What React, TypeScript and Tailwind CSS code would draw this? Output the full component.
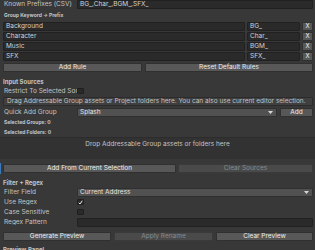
import React from 'react';

const rules = [
  { keyword: 'Background', prefix: 'BG_' },
  { keyword: 'Character', prefix: 'Char_' },
  { keyword: 'Music', prefix: 'BGM_' },
  { keyword: 'SFX', prefix: 'SFX_' },
];

const Field: React.FC<{ value?: string; className?: string }> = ({ value, className = '' }) => (
  <div
    className={`h-[9px] bg-[#2a2a2a] border border-[#212121] rounded-[1px] flex items-center px-[2px] text-[#d2d2d2] leading-none overflow-hidden whitespace-nowrap ${className}`}
  >
    {value}
  </div>
);

const Button: React.FC<{ label: string; disabled?: boolean; className?: string }> = ({
  label,
  disabled,
  className = '',
}) => (
  <div
    className={`h-[9px] border rounded-[1px] flex items-center justify-center leading-none whitespace-nowrap ${
      disabled
        ? 'bg-[#4a4a4a] border-[#3a3a3a] text-[#8a8a8a]'
        : 'bg-[#585858] border-[#303030] text-[#eeeeee]'
    } ${className}`}
  >
    {label}
  </div>
);

const Dropdown: React.FC<{ value: string; className?: string }> = ({ value, className = '' }) => (
  <div
    className={`h-[9px] bg-[#515151] border border-[#303030] rounded-[1px] flex items-center justify-between pl-[2px] pr-[3px] text-[#e4e4e4] leading-none ${className}`}
  >
    <span>{value}</span>
    <svg width="5" height="3" viewBox="0 0 5 3">
      <polygon points="0,0 5,0 2.5,3" fill="#d8d8d8" />
    </svg>
  </div>
);

const Checkbox: React.FC<{ checked?: boolean }> = ({ checked }) => (
  <div className="w-[7px] h-[6px] bg-[#2a2a2a] border border-[#1f1f1f] rounded-[1px] flex items-center justify-center">
    {checked && (
      <svg width="5" height="5" viewBox="0 0 10 10">
        <path d="M1.5 5.5 L4 8 L8.5 1.5" stroke="#eeeeee" strokeWidth="2" fill="none" />
      </svg>
    )}
  </div>
);

const Row: React.FC<{ label: string; children?: React.ReactNode }> = ({ label, children }) => (
  <div className="h-[10px] flex items-center">
    <div className="w-[74px] pl-[1px] whitespace-nowrap overflow-hidden leading-none">{label}</div>
    <div className="flex-1 flex items-center">{children}</div>
  </div>
);

const Header: React.FC<{ label: string; className?: string }> = ({ label, className = '' }) => (
  <div className={`h-[9px] flex items-center pl-[1px] font-bold text-[6px] leading-none ${className}`}>{label}</div>
);

const App: React.FC = () => {
  return (
    <div className="relative w-[315px] h-[250px] overflow-hidden bg-[#383838] font-['Inter',sans-serif] text-[6.5px] text-[#c4c4c4]">
      <div className="px-[2px] pr-[2px]">
        <div className="h-[9px] flex items-center">
          <div className="w-[75px] pl-[2px] leading-none whitespace-nowrap">Known Prefixes (CSV)</div>
          <Field value="BG_,Char_,BGM_,SFX_" className="flex-1" />
        </div>

        <div className="h-[12px] flex items-center pl-[2px] font-bold text-[5px] leading-none">
          Group Keyword -&gt; Prefix
        </div>

        <div className="pl-[1px]">
          {rules.map((rule) => (
            <div key={rule.keyword} className="h-[10px] flex items-center gap-[2px]">
              <Field value={rule.keyword} className="flex-1" />
              <Field value={rule.prefix} className="w-[53px]" />
              <Button label="X" className="w-[11px] text-[6px]" />
            </div>
          ))}

          <div className="mt-[2px] flex gap-[3px]">
            <Button label="Add Rule" className="w-[139px] h-[8px]" />
            <Button label="Reset Default Rules" className="flex-1 h-[8px]" />
          </div>
        </div>

        <Header label="Input Sources" className="mt-[5px]" />
        <div className="pl-[1px]">
          <Row label="Restrict To Selected Source">
            <Checkbox />
          </Row>

          <div className="mt-[1px] h-[9px] bg-[#3f3f3f] border border-[#2c2c2c] rounded-[1px] flex items-center px-[3px] leading-none whitespace-nowrap overflow-hidden">
            Drag Addressable Group assets or Project folders here. You can also use current editor selection.
          </div>

          <div className="mt-[2px] h-[9px] flex items-center">
            <div className="w-[74px] pl-[1px] leading-none whitespace-nowrap">Quick Add Group</div>
            <Dropdown value="Splash" className="flex-1" />
            <Button label="Add" className="w-[33px] ml-[3px]" />
          </div>

          <div className="h-[10px] flex items-center pl-[1px] font-bold text-[5px] leading-none">
            Selected Groups: 0
          </div>
          <div className="h-[10px] flex items-center pl-[1px] font-bold text-[5px] leading-none">
            Selected Folders: 0
          </div>
        </div>
      </div>

      <div className="h-[22px] bg-[#323232] border-t border-[#2c2c2c] flex justify-center pt-[3px] leading-none">
        Drop Addressable Group assets or folders here
      </div>

      <div className="relative px-[3px] pr-[2px] mt-[5px] flex gap-[2px]">
        <div className="absolute left-0 top-[-1px] w-[1px] h-[11px] bg-[#3a79bb]" />
        <Button label="Add From Current Selection" className="w-[173px]" />
        <Button label="Clear Sources" disabled className="flex-1" />
      </div>

      <div className="px-[2px] pr-[2px]">
        <Header label="Filter + Regex" className="mt-[5px]" />
        <div className="pl-[1px]">
          <Row label="Filter Field">
            <Dropdown value="Current Address" className="flex-1" />
          </Row>
          <Row label="Use Regex">
            <Checkbox checked />
          </Row>
          <Row label="Case Sensitive">
            <Checkbox />
          </Row>
          <Row label="Regex Pattern">
            <Field className="flex-1" />
          </Row>

          <div className="mt-[5px] flex gap-[3px]">
            <Button label="Generate Preview" className="w-[108px] h-[8px]" />
            <Button label="Apply Rename" disabled className="w-[99px] h-[8px]" />
            <Button label="Clear Preview" className="flex-1 h-[8px]" />
          </div>
        </div>

        <Header label="Preview Panel" className="mt-[4px]" />
      </div>
    </div>
  );
};

export default App;
